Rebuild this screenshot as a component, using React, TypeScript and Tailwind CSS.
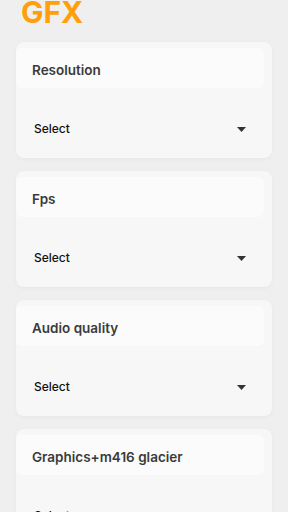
import React from 'react';

const items = ['Resolution', 'Fps', 'Audio quality', 'Graphics+m416 glacier'];

function Card({ title }: { title: string }) {
  return (
    <div className="h-[116px] w-[256px] shrink-0 rounded-[8px] bg-[#f7f7f7] shadow-[0_1px_4px_rgba(0,0,0,0.04)]">
      <div className="mr-2 mt-1.5 flex h-[40px] items-center rounded-[6px] bg-[#fbfbfb] pl-4 pt-[4px] text-[13.5px] font-semibold text-[#3a3a3a]">
        {title}
      </div>
      <div className="mt-[32px] flex items-center justify-between pl-[18px] pr-[26px]">
        <span className="text-[12px] font-medium text-[#111]">Select</span>
        <svg width="9" height="5" viewBox="0 0 9 5" className="mt-[1px]">
          <path d="M0 0 L9 0 L4.5 5 Z" fill="#333" />
        </svg>
      </div>
    </div>
  );
}

export default function App() {
  return (
    <div
      className="h-[512px] w-[288px] overflow-hidden bg-[#efefef]"
      style={{ fontFamily: 'Inter, "Noto Sans", sans-serif' }}
    >
      <div className="-mt-[4px] pl-[21px] text-[30px] font-bold leading-[32px] text-[#ff9f0a]">GFX</div>
      <div className="mt-[14px] flex flex-col gap-[13px] pl-4">
        {items.map((t) => (
          <Card key={t} title={t} />
        ))}
      </div>
    </div>
  );
}
